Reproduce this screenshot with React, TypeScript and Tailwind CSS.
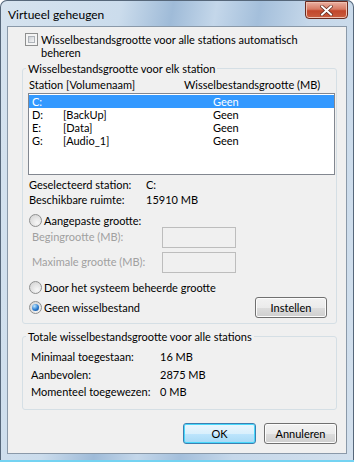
const Checkbox = () => (
  <span className="block w-[13px] h-[13px] shrink-0 border border-[#8e8f8f] bg-[#f4f4f4] p-[2px]">
    <span className="block w-full h-full border border-[#aeb3b9] bg-[linear-gradient(135deg,#cbcfd5,#f6f6f6)]" />
  </span>
);

const Radio = ({ checked = false }: { checked?: boolean }) => (
  <span className="flex w-[13px] h-[13px] shrink-0 items-center justify-center rounded-full border border-[#8e8f8f] bg-[radial-gradient(circle_at_65%_70%,#f7f7f7,#cfcfcf)]">
    {checked && (
      <span className="block w-[7px] h-[7px] rounded-full bg-[radial-gradient(circle_at_35%_30%,#bfe8ff,#2a7bd0_55%,#0d437f)]" />
    )}
  </span>
);

const Button = ({ label, primary = false, wide = false }: { label: string; primary?: boolean; wide?: boolean }) => (
  <button
    className={
      primary
        ? "w-[73px] h-[21px] rounded-[3px] border border-[#3c7fb1] bg-[linear-gradient(#eaf6fd_0%,#d9f0fc_50%,#bee6fd_50%,#a7d9f5_100%)] shadow-[inset_0_0_0_1px_#48d8fb] leading-[19px] text-center"
        : wide
        ? "w-[73px] h-[21px] rounded-[3px] border border-[#707070] bg-[linear-gradient(#f2f2f2_0%,#ebebeb_50%,#dddddd_50%,#cfcfcf_100%)] shadow-[inset_0_0_0_1px_#fcfcfc] leading-[19px] text-center"
        : "w-[72px] h-[21px] rounded-[3px] border border-[#707070] bg-[linear-gradient(#f2f2f2_0%,#ebebeb_50%,#dddddd_50%,#cfcfcf_100%)] shadow-[inset_0_0_0_1px_#fcfcfc] leading-[19px] text-center"
    }
  >
    {label}
  </button>
);

const drives = [
  { id: "C:", name: "", size: "Geen", selected: true },
  { id: "D:", name: "[BackUp]", size: "Geen" },
  { id: "E:", name: "[Data]", size: "Geen" },
  { id: "G:", name: "[Audio_1]", size: "Geen" },
];

export default function App() {
  return (
    <div className="w-[354px] h-[462px] flex flex-col rounded-t-[7px] bg-[linear-gradient(100deg,#d6e3ef_0%,#cbdcec_28%,#9fbbd8_40%,#c4d7ea_50%,#a4bfdb_60%,#c6d8ea_72%,#d3e0ed_100%)] shadow-[inset_0_-2px_0_#74d3f2,inset_0_0_0_1px_#56677a] font-['Lato',sans-serif] text-[11px] text-black whitespace-nowrap">
      {/* title bar */}
      <div className="h-[26px] flex justify-between items-start shrink-0">
        <span className="pl-[8px] pt-[8px] leading-[13px] text-[12px]">Virtueel geheugen</span>
        <div className="mt-[1px] mr-[6px] w-[43px] h-[18px] flex items-center justify-center rounded-b-[4px] border border-[#6b2b1f] bg-[linear-gradient(#eab0a2_0%,#d77a63_45%,#c2472c_55%,#c95d3f_100%)] shadow-[inset_0_0_0_1px_#f0c0b0]">
          <svg width="13" height="11" viewBox="0 0 13 11">
            <path d="M2 1.5 L11 9.5 M11 1.5 L2 9.5" stroke="#5a2418" strokeWidth="3.4" strokeLinecap="square" />
            <path d="M2 1.5 L11 9.5 M11 1.5 L2 9.5" stroke="#ffffff" strokeWidth="2" strokeLinecap="square" />
          </svg>
        </div>
      </div>

      {/* client */}
      <div className="mx-[7px] h-[428px] border border-[#8a99a9] bg-[#f0f0f0]">
        <div className="flex pl-[17px] pt-[6px] gap-[3px]">
          <Checkbox />
          <span className="leading-[13px]">
            Wisselbestandsgrootte voor alle stations automatisch
            <br />
            beheren
          </span>
        </div>

        <fieldset className="ml-[14px] w-[315px] mt-[3px] min-w-0 rounded-[3px] border border-[#d5dfe5] pl-[5px] pr-[1px] pb-[5px]">
          <legend className="ml-[-2px] px-[2px] leading-[13px]">Wisselbestandsgrootte voor elk station</legend>
          <div className="mt-[3px] flex leading-[13px] pl-[1px]">
            <span className="w-[155px]">Station [Volumenaam]</span>
            <span>Wisselbestandsgrootte (MB)</span>
          </div>
          <div className="mt-[2px] h-[82px] border border-[#828790] bg-white pt-[1px]">
            {drives.map((d) => (
              <div
                key={d.id}
                className={
                  d.selected
                    ? "flex h-[13px] leading-[13px] pl-[3px] bg-[#3399ff] text-white"
                    : "flex h-[13px] leading-[13px] pl-[3px]"
                }
              >
                <span className="w-[31px]">{d.id}</span>
                <span className="w-[150px]">{d.name}</span>
                <span>{d.size}</span>
              </div>
            ))}
          </div>

          <div className="mt-[2px] pl-[1px] leading-[15px]">
            <div className="flex">
              <span className="w-[117px]">Geselecteerd station:</span>
              <span>C:</span>
            </div>
            <div className="flex">
              <span className="w-[117px]">Beschikbare ruimte:</span>
              <span>15910 MB</span>
            </div>
          </div>

          <div className="mt-[7px] h-[13px] flex items-center gap-[2px] pl-[1px]">
            <Radio />
            <span className="leading-[13px]">Aangepaste grootte:</span>
          </div>
          <div className="h-[21px] flex items-center">
            <span className="w-[134px] pl-[4px] text-[#a0a0a0]">Begingrootte (MB):</span>
            <span className="w-[74px] h-[21px] border border-[#bdbdbd] bg-[#f0f0f0]" />
          </div>
          <div className="mt-[4px] h-[21px] flex items-center">
            <span className="w-[134px] pl-[4px] text-[#a0a0a0]">Maximale grootte (MB):</span>
            <span className="w-[74px] h-[21px] border border-[#bdbdbd] bg-[#f0f0f0]" />
          </div>
          <div className="mt-[8px] h-[13px] flex items-center gap-[2px] pl-[1px]">
            <Radio />
            <span className="leading-[13px]">Door het systeem beheerde grootte</span>
          </div>
          <div className="mt-[3px] h-[21px] flex items-center justify-between">
            <div className="flex items-center gap-[2px] pl-[1px]">
              <Radio checked />
              <span className="leading-[13px]">Geen wisselbestand</span>
            </div>
            <div className="mr-[8px] flex">
              <Button label="Instellen" />
            </div>
          </div>
        </fieldset>

        <fieldset className="ml-[14px] w-[315px] mt-[6px] min-w-0 rounded-[3px] border border-[#d5dfe5] pl-[5px] pr-[1px] pb-[8px]">
          <legend className="ml-[-2px] px-[2px] leading-[13px]">Totale wisselbestandsgrootte voor alle stations</legend>
          <div className="mt-[5px] leading-[17.5px]">
            <div className="flex">
              <span className="w-[132px] pl-[3px]">Minimaal toegestaan:</span>
              <span>16 MB</span>
            </div>
            <div className="flex">
              <span className="w-[132px] pl-[3px]">Aanbevolen:</span>
              <span>2875 MB</span>
            </div>
            <div className="flex">
              <span className="w-[132px] pl-[3px]">Momenteel toegewezen:</span>
              <span>0 MB</span>
            </div>
          </div>
        </fieldset>

        <div className="mt-[13px] flex justify-end gap-[8px] pr-[9px]">
          <Button label="OK" primary />
          <Button label="Annuleren" wide />
        </div>
      </div>
    </div>
  );
}
